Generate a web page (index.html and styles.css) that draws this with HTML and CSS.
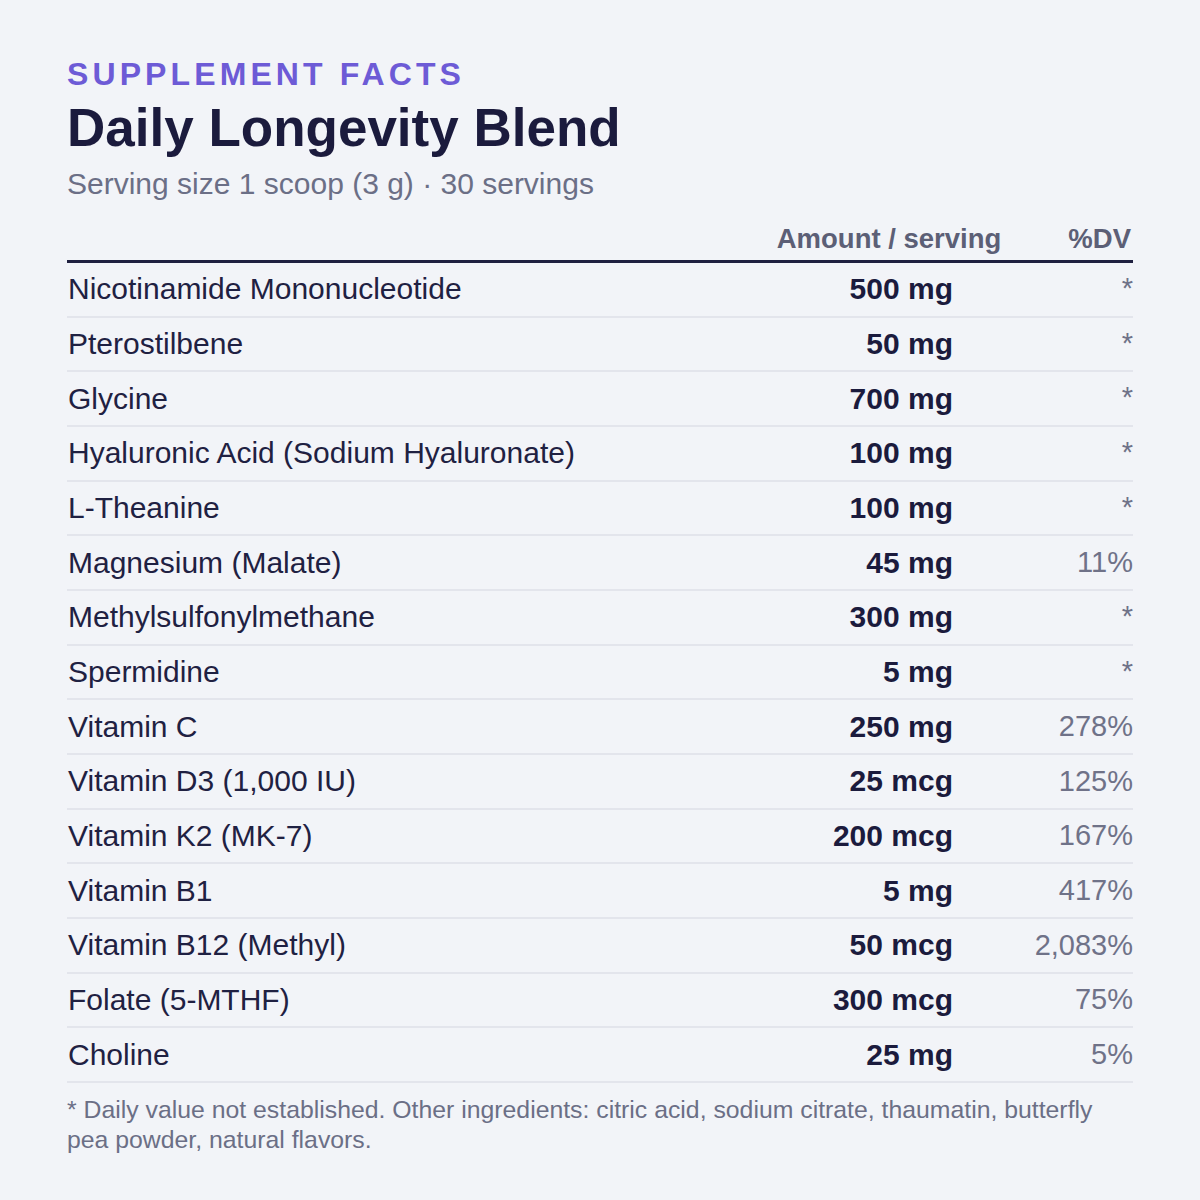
FILE: index.html
```html
<!DOCTYPE html>
<html lang="en">
<head>
<meta charset="utf-8">
<title>Supplement Facts</title>
<link rel="stylesheet" href="styles.css">
</head>
<body>
<main class="panel">
  <div class="eyebrow">SUPPLEMENT FACTS</div>
  <h1 class="title">Daily Longevity Blend</h1>
  <p class="subtitle">Serving size 1 scoop (3 g) · 30 servings</p>
  <div class="head">
    <span class="head-amount">Amount / serving</span>
    <span class="head-dv">%DV</span>
  </div>
  <div class="rows">
    <div class="row"><span class="name">Nicotinamide Mononucleotide</span><span class="amt">500 mg</span><span class="dv star">*</span></div>
    <div class="row"><span class="name">Pterostilbene</span><span class="amt">50 mg</span><span class="dv star">*</span></div>
    <div class="row"><span class="name">Glycine</span><span class="amt">700 mg</span><span class="dv star">*</span></div>
    <div class="row"><span class="name">Hyaluronic Acid (Sodium Hyaluronate)</span><span class="amt">100 mg</span><span class="dv star">*</span></div>
    <div class="row"><span class="name">L-Theanine</span><span class="amt">100 mg</span><span class="dv star">*</span></div>
    <div class="row"><span class="name">Magnesium (Malate)</span><span class="amt">45 mg</span><span class="dv">11%</span></div>
    <div class="row"><span class="name">Methylsulfonylmethane</span><span class="amt">300 mg</span><span class="dv star">*</span></div>
    <div class="row"><span class="name">Spermidine</span><span class="amt">5 mg</span><span class="dv star">*</span></div>
    <div class="row"><span class="name">Vitamin C</span><span class="amt">250 mg</span><span class="dv">278%</span></div>
    <div class="row"><span class="name">Vitamin D3 (1,000 IU)</span><span class="amt">25 mcg</span><span class="dv">125%</span></div>
    <div class="row"><span class="name">Vitamin K2 (MK-7)</span><span class="amt">200 mcg</span><span class="dv">167%</span></div>
    <div class="row"><span class="name">Vitamin B1</span><span class="amt">5 mg</span><span class="dv">417%</span></div>
    <div class="row"><span class="name">Vitamin B12 (Methyl)</span><span class="amt">50 mcg</span><span class="dv">2,083%</span></div>
    <div class="row"><span class="name">Folate (5-MTHF)</span><span class="amt">300 mcg</span><span class="dv">75%</span></div>
    <div class="row"><span class="name">Choline</span><span class="amt">25 mg</span><span class="dv">5%</span></div>
  </div>
  <p class="note">* Daily value not established. Other ingredients: citric acid, sodium citrate, thaumatin, butterfly pea powder, natural flavors.</p>
</main>
</body>
</html>
```
FILE: styles.css
```css
html, body {
  margin: 0;
  padding: 0;
  background: #f2f4f8;
}
body {
  font-family: "Liberation Sans", Arial, sans-serif;
  color: #1c1d3d;
}
.panel {
  padding: 56px 67px 40px 67px;
}
.eyebrow {
  font-size: 32px;
  font-weight: 700;
  letter-spacing: 4.1px;
  color: #6d5bd6;
  line-height: 36px;
}
.title {
  margin: 5px 0 0 0;
  font-size: 53px;
  font-weight: 700;
  line-height: 62px;
  color: #1b1b3d;
}
.subtitle {
  margin: 7px 0 0 0;
  font-size: 30px;
  line-height: 36px;
  color: #6b6f86;
}
.head {
  display: flex;
  justify-content: flex-end;
  align-items: center;
  gap: 67px;
  margin-top: 16px;
  height: 42px;
  padding-right: 2px;
  border-bottom: 3px solid #1f2040;
  font-size: 27.5px;
  font-weight: 700;
  color: #5c5f76;
}
.rows {
  display: flex;
  flex-direction: column;
}
.row {
  box-sizing: border-box;
  display: grid;
  grid-template-columns: 1fr auto 180px;
  align-items: center;
  height: 54.67px;
  border-bottom: 2px solid #e3e5ec;
  font-size: 30px;
}
.name {
  padding-left: 1px;
  color: #1f2142;
}
.amt {
  font-weight: 700;
  text-align: right;
  color: #1b1b3d;
}
.dv {
  text-align: right;
  font-size: 29px;
  color: #6f7288;
}
.dv.star {
  align-self: start;
  padding-top: 9px;
}
.note {
  margin: 12px 0 0 0;
  font-size: 24.8px;
  line-height: 30px;
  color: #6b6f86;
}
```
